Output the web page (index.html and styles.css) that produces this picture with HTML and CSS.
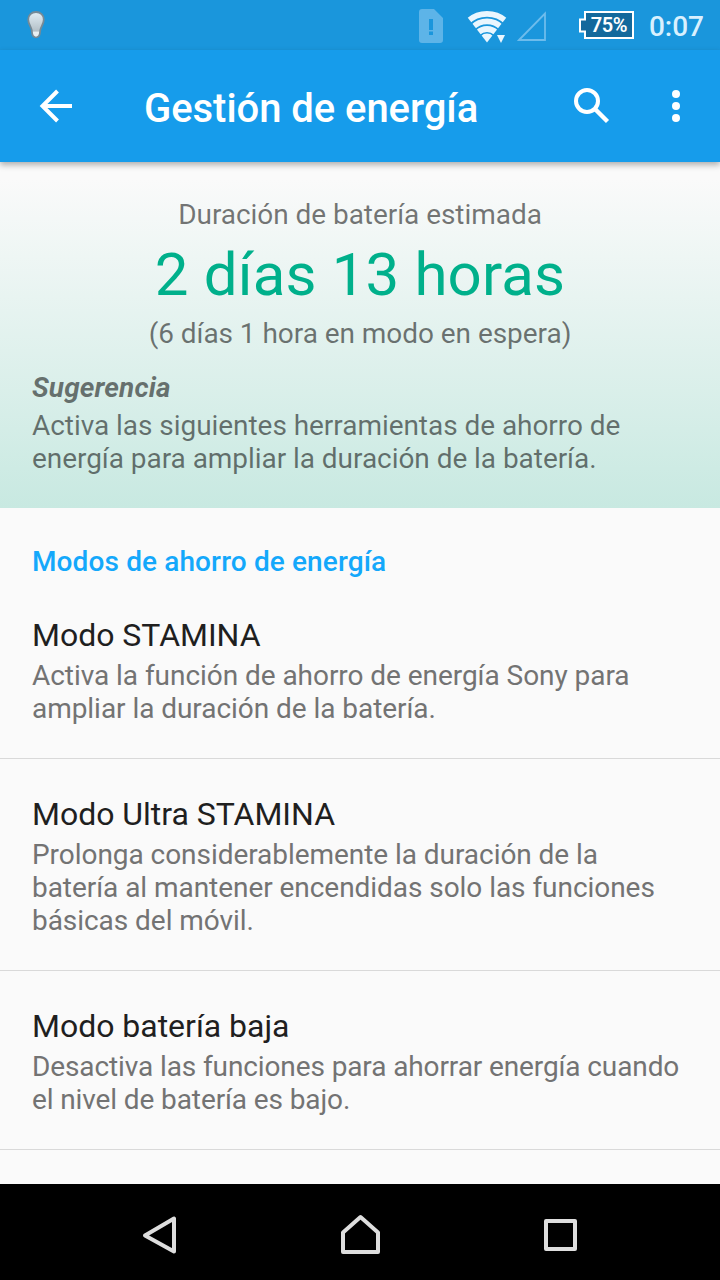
FILE: index.html
```html
<!DOCTYPE html>
<html lang="es">
<head>
    <meta charset="UTF-8">
    <meta name="viewport" content="width=device-width, initial-scale=1.0">
    <title>Gestión de energía</title>
    <link rel="stylesheet" href="styles.css">
</head>
<body>
    <!-- Barra de estado -->
    <div class="status-bar">
        <svg class="bulb" width="20" height="32" viewBox="0 0 20 32">
            <defs>
                <linearGradient id="glass" x1="0" y1="0" x2="0" y2="1">
                    <stop offset="0" stop-color="#e2eff6"/>
                    <stop offset="0.75" stop-color="#b4c0c7"/>
                    <stop offset="0.8" stop-color="#e8eff2"/>
                </linearGradient>
            </defs>
            <path d="M10 3C5.500 3 2.200 6.100 2.200 10.500c0 4.600 3 7 3.600 11 .2 2 .2 4.500 1.400 5.700 1.500 1.500 4.100 1.500 5.600 0 1.200-1.200 1.200-3.700 1.400-5.700.6-4 3.600-6.400 3.600-11C17.800 6.100 14.500 3 10 3z" fill="url(#glass)" stroke="#768a96" stroke-width="1.800"/>
        </svg>
        <div class="status-icons">
            <svg class="sim" width="24" height="34" viewBox="0 0 24 34">
                <path fill-rule="evenodd" d="M3 0h12l9 9v22a3 3 0 0 1-3 3H3a3 3 0 0 1-3-3V3a3 3 0 0 1 3-3zM10 10v11h4V10zM10 22.500v3.500h4v-3.500z" fill="#5db4e8"/>
            </svg>
            <svg class="wifi" width="40" height="34" viewBox="0 0 40 34">
                <clipPath id="fan"><path d="M20 33.500L-1 6.500V0h42v6.500z"/></clipPath>
                <g clip-path="url(#fan)" fill="none" stroke="#eaf6fe" stroke-width="5.800">
                    <circle cx="20" cy="33" r="28.200"/>
                    <circle cx="20" cy="33" r="20.600"/>
                    <circle cx="20" cy="33" r="13"/>
                    <circle cx="20" cy="33" r="4.200" stroke-width="8.400"/>
                </g>
                <path d="M30 26h8l-4 8z" fill="#eaf6fe"/>
            </svg>
            <svg class="signal" width="32" height="32" viewBox="0 0 32 32">
                <path d="M3 30L29 3.500V30z" fill="none" stroke="#6dbcec" stroke-width="1.800"/>
            </svg>
            <div class="battery">
                <svg width="56" height="29" viewBox="0 0 56 29">
                    <path d="M6 1h48v26H6v-6.500H1v-12h5z" fill="#13699c" stroke="#fff" stroke-width="2"/>
                </svg>
                <span>75%</span>
            </div>
            <span class="clock">0:07</span>
        </div>
    </div>

    <header>
        <svg class="back" width="34" height="34" viewBox="0 0 34 34">
            <path d="M33 17H4M18.500 2L3.500 17l15 15" fill="none" stroke="#fff" stroke-width="4"/>
        </svg>
        <h1>Gestión de energía</h1>
        <svg class="search" width="36" height="36" viewBox="0 0 36 36">
            <circle cx="13" cy="13" r="11" fill="none" stroke="#fff" stroke-width="4"/>
            <path d="M21.500 21.500L33.500 33.500" stroke="#fff" stroke-width="4.400"/>
        </svg>
        <svg class="more" width="8" height="32" viewBox="0 0 8 32">
            <g fill="#fff">
                <circle cx="4" cy="4" r="4"/>
                <circle cx="4" cy="16" r="4"/>
                <circle cx="4" cy="28" r="4"/>
            </g>
        </svg>
    </header>

    <main>
        <section class="estimate">
            <p class="center">Duración de batería estimada</p>
            <p class="time">2 días 13 horas</p>
            <p class="center">(6 días 1 hora en modo en espera)</p>
            <h3>Sugerencia</h3>
            <p>Activa las siguientes herramientas de ahorro de energía para ampliar la duración de la batería.</p>
        </section>

        <section class="modes">
            <h2>Modos de ahorro de energía</h2>
            <ul>
                <li>
                    <h4>Modo STAMINA</h4>
                    <p>Activa la función de ahorro de energía Sony para ampliar la duración de la batería.</p>
                </li>
                <li>
                    <h4>Modo Ultra STAMINA</h4>
                    <p>Prolonga considerablemente la duración de la batería al mantener encendidas solo las funciones básicas del móvil.</p>
                </li>
                <li>
                    <h4>Modo batería baja</h4>
                    <p>Desactiva las funciones para ahorrar energía cuando el nivel de batería es bajo.</p>
                </li>
            </ul>
        </section>
    </main>

    <!-- Botones de navegación -->
    <footer>
        <svg width="40" height="44" viewBox="0 0 40 44">
            <path d="M34 5.500v33L5 22.500z" fill="none" stroke="#dedede" stroke-width="4" stroke-linejoin="round"/>
        </svg>
        <svg width="40" height="44" viewBox="0 0 40 44">
            <path d="M20.500 4L38 19.500V39H3V19.500z" fill="none" stroke="#dedede" stroke-width="4" stroke-linejoin="round"/>
        </svg>
        <svg width="40" height="44" viewBox="0 0 40 44">
            <path d="M6 8h29v28H6z" fill="none" stroke="#dedede" stroke-width="4" stroke-linejoin="round"/>
        </svg>
    </footer>
</body>
</html>
```
FILE: styles.css
```css
* {
    box-sizing: border-box;
    margin: 0;
    padding: 0;
}

body {
    width: 720px;
    height: 1280px;
    display: flex;
    flex-direction: column;
    font-family: Roboto, sans-serif;
    font-size: 28px;
    line-height: 33px;
    color: #737373;
    background-color: #fafafa;
    overflow: hidden;
}

svg {
    display: block;
    flex-shrink: 0;
}

p {
    letter-spacing: -0.05px;
}

/* Barra de estado */
.status-bar {
    height: 50px;
    padding: 0 16px 0 26px;
    display: flex;
    justify-content: space-between;
    align-items: flex-start;
    background-color: #1a96dc;
}

.bulb {
    margin-top: 9px;
}

.status-icons {
    display: flex;
    align-items: flex-start;
}

.sim {
    margin: 9px 24px 0 0;
}

.wifi {
    margin: 9px 9px 0 0;
}

.signal {
    margin: 10px 31px 0 0;
}

.battery {
    position: relative;
    margin: 11px 14px 0 0;
}

.battery span {
    position: absolute;
    left: 6px;
    top: 0;
    width: 48px;
    text-align: center;
    font-size: 20px;
    font-weight: 600;
    line-height: 28px;
    letter-spacing: -0.4px;
    color: #fff;
}

.clock {
    margin-top: 10px;
    font-size: 28px;
    font-weight: 500;
    color: #d9f0fe;
}

/* Cabecera */
header {
    position: relative;
    z-index: 1;
    height: 112px;
    padding: 0 40px 0 39px;
    display: flex;
    align-items: center;
    background-color: #169ceb;
    box-shadow: 0 3px 6px rgba(0, 0, 0, 0.3);
}

header h1 {
    flex: 1;
    margin: 6px 0 0 71px;
    font-size: 40px;
    font-weight: 500;
    line-height: 48px;
    letter-spacing: -0.05px;
    color: #fff;
}

.search {
    margin-right: 62px;
}

main {
    flex: 1;
    overflow: hidden;
}

.estimate {
    height: 346px;
    padding: 36px 32px 0;
    color: rgba(0, 0, 0, 0.54);
    background: linear-gradient(#fafafa 5%, #c8e9e1);
}

.center {
    text-align: center;
}

.time {
    margin: 9px 0 7px;
    text-align: center;
    font-size: 60px;
    line-height: 70px;
    letter-spacing: 0.15px;
    color: #00b08b;
}

.estimate h3 {
    margin: 21px 0 5px;
    font-size: 28px;
    font-style: italic;
    font-weight: 700;
    letter-spacing: 0.1px;
}

/* Lista de modos */
.modes h2 {
    padding: 37px 32px 0;
    font-size: 28px;
    font-weight: 500;
    letter-spacing: 0.12px;
    color: #14a8fb;
}

.modes ul {
    list-style-type: none;
}

.modes li {
    padding: 36px 32px 33px;
    border-bottom: 1px solid #d9d9d9;
}

.modes li:first-child {
    padding-top: 38px;
}

.modes li:last-child p {
    letter-spacing: -0.11px;
}

.modes h4 {
    margin-bottom: 5px;
    font-size: 32px;
    font-weight: 400;
    line-height: 38px;
    letter-spacing: -0.02px;
    color: #1f1f1f;
}

/* Barra inferior */
footer {
    height: 96px;
    padding: 6px 140px 0 140px;
    display: flex;
    justify-content: space-between;
    align-items: center;
    background-color: #000;
}
```
